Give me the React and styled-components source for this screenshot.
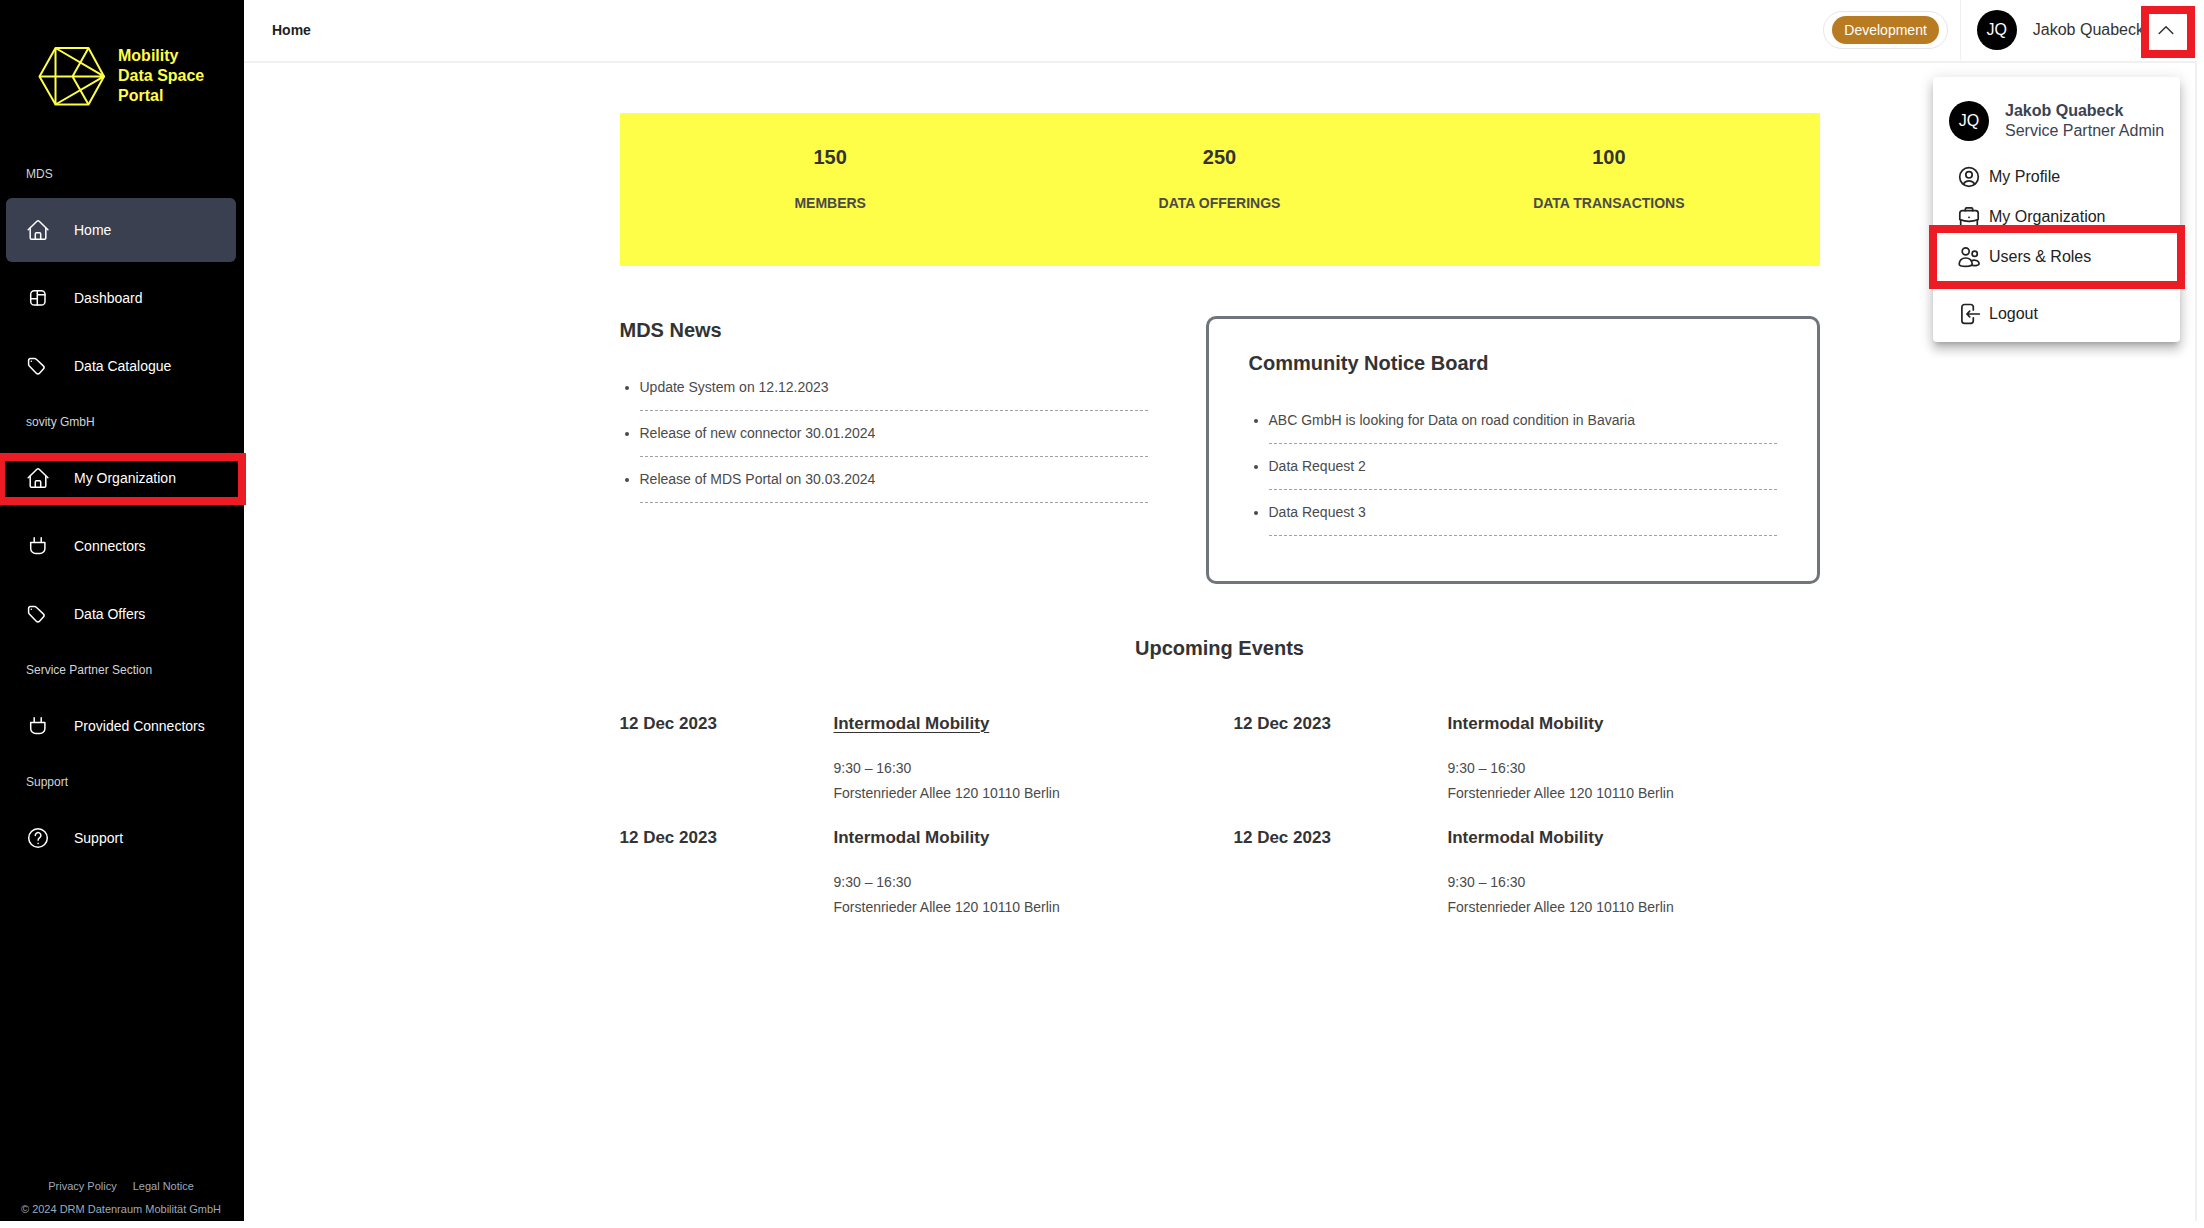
import React from "react";
import styled, { createGlobalStyle, css } from "styled-components";

const color = {
  yellow: "#fefe48",
  black: "#000000",
  ink: "#333333",
  body: "#4a4a4a",
  line: "#f0f0f0",
  mark: "#ed1c24",
};

const GlobalStyle = createGlobalStyle`
  *, *::before, *::after { box-sizing: border-box; }
  body {
    margin: 0;
    background: #ffffff;
    color: ${color.ink};
    font-family: "Liberation Sans", Arial, sans-serif;
    font-size: 14px;
    line-height: 25px;
  }
  h1, h2, h3, p, ul { margin: 0; padding: 0; font-size: inherit; font-weight: inherit; }
  a { color: inherit; text-decoration: none; }
  button { margin: 0; padding: 0; border: 0; background: none; color: inherit; font: inherit; cursor: pointer; }
`;

const Shell = styled.div`
  display: flex;
  min-height: 100vh;
  padding: 0 7px 7px 0;
  overflow-x: hidden;
`;

const Highlight = styled.span`
  position: absolute;
  inset: ${(p) => p.$inset};
  z-index: 2;
  border: 8px solid ${color.mark};
  pointer-events: none;
`;

/* Sidebar */

const Sidebar = styled.aside`
  display: flex;
  flex: 0 0 244px;
  flex-direction: column;
  background: ${color.black};
  color: #ffffff;
`;

const Brand = styled.a`
  display: flex;
  align-items: center;
  gap: 13px;
  padding: 46px 37px 44px;
  color: ${color.yellow};
  font-size: 16px;
  font-weight: 700;
  line-height: 20px;
`;

const BrandName = styled.span`
  flex: none;
  white-space: pre-line;
`;

const GroupLabel = styled.h2`
  padding: 16px 26px;
  color: #d1d5db;
  font-size: 12px;
  line-height: 16px;
`;

const NavList = styled.ul`
  display: flex;
  flex-direction: column;
  gap: 4px;
  padding: 0 8px 0 6px;
  list-style: none;
`;

const NavItem = styled.li`
  position: relative;
`;

const NavLink = styled.a`
  display: flex;
  align-items: center;
  gap: 24px;
  height: 64px;
  padding: 0 20px;
  border-radius: 6px;
  ${(p) => p.$active && css`background: #3b4050;`}
`;

const SidebarFooter = styled.footer`
  display: flex;
  flex-direction: column;
  align-items: center;
  margin-top: auto;
  padding: 24px 2px 0 0;
  color: #9fa8b8;
  font-size: 11px;
  line-height: 23px;
`;

const FooterLinks = styled.nav`
  display: flex;
  gap: 16px;
`;

/* Header */

const Page = styled.div`
  display: flex;
  flex: 1;
  flex-direction: column;
  min-width: 0;
`;

const TopBar = styled.header`
  display: flex;
  align-items: center;
  height: 63px;
  padding: 0 0 1px 28px;
  border-bottom: 2px solid ${color.line};
`;

const PageTitle = styled.h1`
  margin-right: auto;
  color: #1f1f1f;
  font-weight: 700;
`;

const EnvFrame = styled.div`
  margin-right: 12px;
  padding: 4px 8px;
  border: 1px solid #e5e7eb;
  border-radius: 20px;
`;

const EnvBadge = styled.span`
  display: block;
  padding: 0 12px;
  border-radius: 14px;
  background: #b87b22;
  color: #ffffff;
  line-height: 28px;
`;

const UserArea = styled.div`
  position: relative;
  display: flex;
  align-items: center;
  align-self: stretch;
  gap: 16px;
  padding: 0 19px 0 16px;
  border-left: 1px solid ${color.line};
  font-size: 16px;
  line-height: 20px;
`;

const Avatar = styled.span`
  display: grid;
  place-items: center;
  flex: none;
  width: 40px;
  height: 40px;
  border-radius: 50%;
  background: ${color.black};
  color: #ffffff;
  font-size: 16px;
  line-height: 20px;
`;

const UserToggle = styled.button`
  position: relative;
  display: grid;
  place-items: center;
  width: 24px;
  height: 24px;
  margin-left: -6px;
`;

const Menu = styled.div`
  position: absolute;
  top: 77px;
  right: 17px;
  width: 247px;
  padding: 8px 0;
  border-radius: 4px;
  background: #ffffff;
  color: #222222;
  box-shadow: 0 5px 5px -3px rgba(0, 0, 0, 0.2), 0 8px 10px 1px rgba(0, 0, 0, 0.14),
    0 3px 14px 2px rgba(0, 0, 0, 0.12);
`;

const MenuUser = styled.div`
  display: flex;
  gap: 16px;
  padding: 16px;
  color: #3b4252;
  white-space: nowrap;
`;

const MenuUserName = styled.p`
  font-weight: 700;
`;

const MenuList = styled.ul`
  list-style: none;
`;

const MenuItem = styled.li`
  position: relative;
`;

const MenuAction = styled.button`
  display: flex;
  align-items: center;
  gap: 8px;
  width: 100%;
  height: 40px;
  padding: 0 24px;
`;

const MenuDivider = styled.hr`
  height: 1px;
  margin: 8px 0;
  border: 0;
  background: #e5e7eb;
`;

/* Content */

const Main = styled.main`
  flex: 1;
  padding: 50px 24px;
  border-right: 2px solid ${color.line};
`;

const Content = styled.div`
  display: flex;
  flex-direction: column;
  gap: 50px;
  max-width: 1200px;
  margin: 0 auto;
  color: ${color.body};
`;

const Stats = styled.section`
  display: grid;
  grid-template-columns: repeat(3, 1fr);
  padding: 30px 16px 50px;
  background: ${color.yellow};
  font-weight: 700;
  text-align: center;
`;

const Heading = styled.h2`
  margin-bottom: ${(p) => p.$space || "20px"};
  color: ${color.ink};
  font-size: 20px;
  font-weight: 700;
  line-height: 28px;
  text-align: ${(p) => p.$align || "inherit"};
`;

const StatLabel = styled.p`
  text-transform: uppercase;
`;

const Boards = styled.div`
  display: flex;
  gap: 58px;
`;

const Board = styled.section`
  box-sizing: content-box;
  flex: 1 1 0;
  ${(p) =>
    p.$framed &&
    css`
      padding: 30px 40px;
      border: 3px solid #6f757b;
      border-radius: 10px;
    `}
`;

const Notices = styled.ul`
  padding: 1px 0 15px 20px;
`;

const Notice = styled.li`
  padding: 10px 0;
  border-bottom: 1px dashed #a3a3a3;
`;

const EventGrid = styled.div`
  display: grid;
  grid-template-columns: 1fr 1fr;
  gap: 19px 28px;
`;

const Event = styled.article`
  display: grid;
  grid-template-columns: 214px 1fr;
`;

const EventHead = styled.h3`
  margin-bottom: 19px;
  color: ${color.ink};
  font-size: 17px;
  font-weight: 700;
  line-height: 26px;
`;

const EventLink = styled.a`
  text-decoration: ${(p) => (p.$underlined ? "underline" : "none")};
  text-decoration-thickness: 1px;
  text-underline-offset: 3px;
`;

/* Icons, all on a 24px grid */

const shapes = {
  home: (
    <>
      <path d="M2.2 11.8 10.9 3.3a1.6 1.6 0 0 1 2.3 0l8.7 8.5" />
      <path d="M4.2 10.2v9.9a1.2 1.2 0 0 0 1.2 1.2h13.2a1.2 1.2 0 0 0 1.2-1.2v-9.9" />
      <path d="M9.3 21.2v-5.3a1.1 1.1 0 0 1 1.1-1.1h3.2a1.1 1.1 0 0 1 1.1 1.1v5.3" />
    </>
  ),
  dashboard: (
    <>
      <rect x="4.7" y="4.7" width="14.3" height="14.3" rx="3.6" />
      <path d="M11.3 4.7V19M4.7 12.7h6.6M11.3 8.8H19" />
    </>
  ),
  tag: (
    <>
      <path d="M4.6 4.6h3.9a2.6 2.6 0 0 1 1.8.7l7 6.600a2.300 2.300 0 0 1 .1 3.200l-3.900 4.200a2.200 2.200 0 0 1-3.200 0l-7-7.300a2.400 2.400 0 0 1-.7-1.700V6.600a2 2 0 0 1 2-2Z" />
      <path d="M5.300 7.300h.1" />
    </>
  ),
  plug: <path d="M8.2 3.8v4.6M15.2 3.8v4.6M4.7 8.5h14.2v5.9a5 5 0 0 1-5 5H9.7a5 5 0 0 1-5-5Z" />,
  help: (
    <>
      <circle cx="12" cy="12" r="9.3" />
      <path d="M9.3 9.5a2.8 2.8 0 1 1 4.4 2.2c-1 .7-1.6 1.2-1.6 2.5M12.1 17.2v.2" />
    </>
  ),
  profile: (
    <>
      <circle cx="12" cy="12" r="9.3" />
      <circle cx="12" cy="9.8" r="3.2" />
      <path d="M6.3 19.1c1.2-2 3.3-3.2 5.7-3.2s4.5 1.2 5.7 3.2" />
    </>
  ),
  briefcase: (
    <>
      <path d="M8.3 5.7V4.3a1.4 1.4 0 0 1 1.4-1.4h4.6a1.4 1.4 0 0 1 1.4 1.4v1.4" />
      <path d="M5.3 5.7h13.400a2.500 2.500 0 0 1 2.500 2.500v6.300c-5.800 2.300-12.600 2.300-18.400 0V8.200a2.500 2.500 0 0 1 2.500-2.500Z" />
      <path d="M3.700 15v4.500a2 2 0 0 0 2 2h12.600a2 2 0 0 0 2-2V15M11.900 12.300h.2" />
    </>
  ),
  users: (
    <>
      <circle cx="8.7" cy="6.3" r="3.5" />
      <circle cx="17.7" cy="8.8" r="2.6" />
      <path d="M8.7 13c-3.800 0-6.500 2.600-6.500 6 0 3.200 13 3.200 13 0 0-3.400-2.700-6-6.500-6Z" />
      <path d="M14.400 15.700c3.300-1.700 7.700.2 7.700 3.300 0 1.300-3.300 1.800-6.900 1.400" />
    </>
  ),
  logout: (
    <>
      <path d="M16.3 8V5a2.5 2.5 0 0 0-2.5-2.5H7.4A2.5 2.5 0 0 0 4.9 5v13.8a2.5 2.5 0 0 0 2.5 2.5h6.4a2.5 2.5 0 0 0 2.5-2.5v-3" />
      <path d="M22.3 12H10M12.7 9.2 9.9 12l2.8 2.8" />
    </>
  ),
  chevron: <path d="M5.2 15.5 12 8.7l6.8 6.8" />,
};

const IconSvg = styled.svg`
  flex: none;
  fill: none;
  stroke: currentColor;
  stroke-width: ${(p) => p.$weight};
  stroke-linecap: round;
  stroke-linejoin: round;
`;

function Icon({ name, weight = 1.5 }) {
  return (
    <IconSvg $weight={weight} width="24" height="24" viewBox="0 0 24 24" aria-hidden="true">
      {shapes[name]}
    </IconSvg>
  );
}

function Logo() {
  return (
    <svg width="68" height="60" viewBox="0 0 68 60" fill="none" stroke="currentColor" strokeWidth="2" strokeLinejoin="round" aria-hidden="true">
      <path d="M18.5 2h33L67 30.4 51.5 58.5h-33L2.500 30.400Z" />
      <path d="M18.500 2v56.500M2.500 30.400H67M18.500 2 67 30.400 18.500 58.500M51.500 2l-16 28.400 16 28.100" />
    </svg>
  );
}

const navigation = [
  {
    label: "MDS",
    items: [
      { icon: "home", text: "Home", active: true },
      { icon: "dashboard", text: "Dashboard" },
      { icon: "tag", text: "Data Catalogue" },
    ],
  },
  {
    label: "sovity GmbH",
    items: [
      { icon: "home", text: "My Organization", marked: true },
      { icon: "plug", text: "Connectors" },
      { icon: "tag", text: "Data Offers" },
    ],
  },
  { label: "Service Partner Section", items: [{ icon: "plug", text: "Provided Connectors" }] },
  { label: "Support", items: [{ icon: "help", text: "Support" }] },
];

const stats = [
  ["150", "Members"],
  ["250", "Data Offerings"],
  ["100", "Data Transactions"],
];

const news = ["Update System on 12.12.2023", "Release of new connector 30.01.2024", "Release of MDS Portal on 30.03.2024"];
const requests = ["ABC GmbH is looking for Data on road condition in Bavaria", "Data Request 2", "Data Request 3"];

const events = [1, 2, 3, 4].map((id) => ({
  id,
  date: "12 Dec 2023",
  title: "Intermodal Mobility",
  time: "9:30 – 16:30",
  place: "Forstenrieder Allee 120 10110 Berlin",
}));

const userActions = [
  { icon: "profile", text: "My Profile" },
  { icon: "briefcase", text: "My Organization" },
  { icon: "users", text: "Users & Roles", marked: true },
];

function SideNavigation() {
  return (
    <Sidebar>
      <Brand href="#home">
        <Logo />
        <BrandName>{"Mobility\nData Space\nPortal"}</BrandName>
      </Brand>
      <nav>
        {navigation.map((group) => (
          <React.Fragment key={group.label}>
            <GroupLabel>{group.label}</GroupLabel>
            <NavList>
              {group.items.map((item) => (
                <NavItem key={item.text}>
                  <NavLink href="#" $active={item.active}>
                    <Icon name={item.icon} />
                    {item.text}
                  </NavLink>
                  {item.marked && <Highlight $inset="7px -10px 5px -9px" />}
                </NavItem>
              ))}
            </NavList>
          </React.Fragment>
        ))}
      </nav>
      <SidebarFooter>
        <FooterLinks>
          <a href="#privacy">Privacy Policy</a>
          <a href="#legal">Legal Notice</a>
        </FooterLinks>
        <p>© 2024 DRM Datenraum Mobilität GmbH</p>
      </SidebarFooter>
    </Sidebar>
  );
}

function UserMenu() {
  return (
    <Menu>
      <MenuUser>
        <Avatar>JQ</Avatar>
        <div>
          <MenuUserName>Jakob Quabeck</MenuUserName>
          <p>Service Partner Admin</p>
        </div>
      </MenuUser>
      <MenuList>
        {userActions.map((action) => (
          <MenuItem key={action.text}>
            <MenuAction type="button">
              <Icon name={action.icon} weight={1.7} />
              {action.text}
            </MenuAction>
            {action.marked && <Highlight $inset="-12px -5px -12px -4px" />}
          </MenuItem>
        ))}
      </MenuList>
      <MenuDivider />
      <MenuAction type="button">
        <Icon name="logout" weight={1.7} />
        Logout
      </MenuAction>
    </Menu>
  );
}

function NoticeBoard({ title, items, framed }) {
  return (
    <Board $framed={framed}>
      <Heading>{title}</Heading>
      <Notices>
        {items.map((text) => (
          <Notice key={text}>{text}</Notice>
        ))}
      </Notices>
    </Board>
  );
}

export default function App() {
  return (
    <>
      <GlobalStyle />
      <Shell>
        <SideNavigation />
        <Page>
          <TopBar>
            <PageTitle>Home</PageTitle>
            <EnvFrame>
              <EnvBadge>Development</EnvBadge>
            </EnvFrame>
            <UserArea>
              <Avatar>JQ</Avatar>
              <span>Jakob Quabeck</span>
              <UserToggle type="button" aria-label="Toggle user menu" aria-expanded="true">
                <Icon name="chevron" />
                <Highlight $inset="-12px -17px -16px -13px" />
              </UserToggle>
              <UserMenu />
            </UserArea>
          </TopBar>
          <Main>
            <Content>
              <Stats>
                {stats.map(([value, label]) => (
                  <div key={label}>
                    <Heading>{value}</Heading>
                    <StatLabel>{label}</StatLabel>
                  </div>
                ))}
              </Stats>
              <Boards>
                <NoticeBoard title="MDS News" items={news} />
                <NoticeBoard title="Community Notice Board" items={requests} framed />
              </Boards>
              <section>
                <Heading $align="center" $space="49px">Upcoming Events</Heading>
                <EventGrid>
                  {events.map((event) => (
                    <Event key={event.id}>
                      <EventHead>{event.date}</EventHead>
                      <div>
                        <EventHead>
                          <EventLink href="#" $underlined={event.id === 1}>{event.title}</EventLink>
                        </EventHead>
                        <p>{event.time}</p>
                        <p>{event.place}</p>
                      </div>
                    </Event>
                  ))}
                </EventGrid>
              </section>
            </Content>
          </Main>
        </Page>
      </Shell>
    </>
  );
}
